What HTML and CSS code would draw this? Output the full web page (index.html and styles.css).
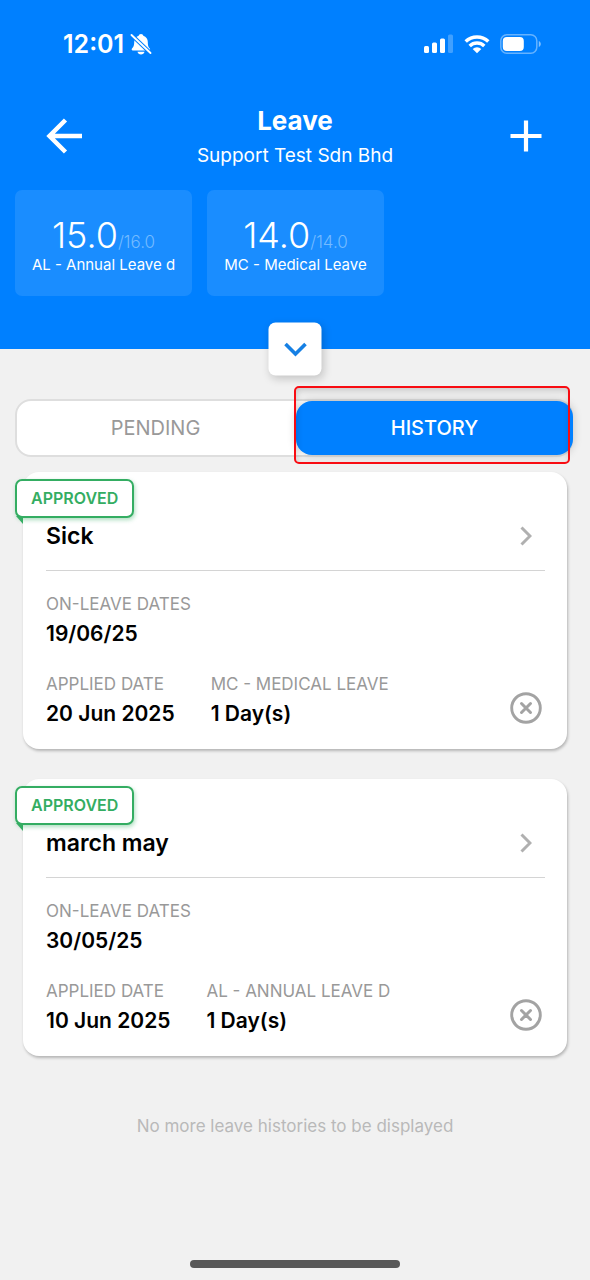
FILE: index.html
```html
<!DOCTYPE html>
<html lang="en">
<head>
<meta charset="utf-8">
<meta name="viewport" content="width=device-width, initial-scale=1">
<title>Leave</title>
<link rel="stylesheet" href="styles.css">
</head>
<body>
<header class="top">
  <div class="status">
    <div class="status-left">
      <span class="clock">12:01</span>
      <svg class="bell" viewBox="0 0 22 22" aria-hidden="true">
        <path fill="#fff" d="M11 1c1.300 0 2.100.8 2.300 1.700 3 .9 4.500 3.400 4.500 6.300 0 4 .8 5.200 2 6.500.7.800.3 2-.8 2H2.800c-1.100 0-1.500-1.200-.8-2 1.200-1.300 2.200-2.500 2.200-6.500 0-2.900 1.500-5.400 4.500-6.300C8.900 1.800 9.700 1 11 1zM7.500 18.800h7c-.4 1.700-1.800 2.700-3.500 2.700s-3.100-1-3.500-2.700z"/>
        <path stroke="#0080ff" stroke-width="4" d="M1 1.500l20 19"/>
        <path stroke="#fff" stroke-width="1.900" stroke-linecap="round" d="M1.500 2l19 18"/>
      </svg>
    </div>
    <div class="status-right">
      <svg class="signal" viewBox="0 0 30 20" aria-hidden="true">
        <g fill="#fff"><rect x="0" y="12" width="5" height="7" rx="1.500"/><rect x="8" y="8.500" width="5" height="10.500" rx="1.500"/><rect x="16" y="4.500" width="5" height="14.500" rx="1.500"/><rect x="24" y="0.500" width="5" height="18.500" rx="1.500" opacity=".25"/></g>
      </svg>
      <svg class="wifi" viewBox="0 0 26 20" aria-hidden="true">
        <g fill="none" stroke="#fff" stroke-width="3.500"><path d="M1.700 7.600a16.300 16.300 0 0 1 22.600 0"/><path d="M5.700 11.900a10.600 10.600 0 0 1 14.600 0"/></g>
        <path fill="#fff" d="M8.700 14.900a6.200 6.200 0 0 1 8.600 0L13 19.200z"/>
      </svg>
      <svg class="battery" viewBox="0 0 42 20" aria-hidden="true">
        <rect x=".8" y=".8" width="36" height="18.400" rx="6" fill="none" stroke="#fff" stroke-width="1.500" opacity=".4"/>
        <rect x="2.800" y="3" width="21" height="14" rx="4" fill="#fff"/>
        <path d="M38.800 7v6c1.200-.5 2-1.600 2-3s-.8-2.500-2-3z" fill="#fff" opacity=".5"/>
      </svg>
    </div>
  </div>

  <div class="bar">
    <button class="icon-btn" type="button" aria-label="Back">
      <svg viewBox="0 0 36 36" aria-hidden="true"><path fill="none" stroke="#fff" stroke-width="4.500" d="M36 18H4M19.500 2L3.500 18l16 16"/></svg>
    </button>
    <div class="heading">
      <h1 class="title">Leave</h1>
      <p class="company">Support Test Sdn Bhd</p>
    </div>
    <button class="icon-btn" type="button" aria-label="Apply for leave">
      <svg viewBox="0 0 36 36" aria-hidden="true"><path fill="none" stroke="#fff" stroke-width="4.200" d="M18 2.500v31M2.500 18h31"/></svg>
    </button>
  </div>

  <div class="balances">
    <div class="balance">
      <div class="amount">15.0<span class="quota">/16.0</span></div>
      <div class="kind">AL - Annual Leave d</div>
    </div>
    <div class="balance">
      <div class="amount">14.0<span class="quota">/14.0</span></div>
      <div class="kind">MC - Medical Leave</div>
    </div>
  </div>

  <button class="expand" type="button" aria-label="Show all balances">
    <svg viewBox="0 0 24 16" aria-hidden="true"><path fill="none" stroke="#1680e4" stroke-width="3.600" d="M2 2.500l10 10 10-10"/></svg>
  </button>
</header>

<main class="content">
  <div class="tabs">
    <button class="tab" type="button">PENDING</button>
    <button class="tab tab-active" type="button">HISTORY</button>
    <div class="marker"></div>
  </div>

  <article class="card">
    <span class="badge">APPROVED</span>
    <div class="card-head">
      <h2 class="reason">Sick</h2>
      <svg class="chevron" viewBox="0 0 12 20" aria-hidden="true"><path fill="none" stroke="#b0b0b0" stroke-width="3" d="M1.500 1.500L10 10l-8.500 8.500"/></svg>
    </div>
    <dl class="field">
      <dt>ON-LEAVE DATES</dt>
      <dd>19/06/25</dd>
    </dl>
    <div class="row">
      <dl class="field">
        <dt>APPLIED DATE</dt>
        <dd>20 Jun 2025</dd>
      </dl>
      <dl class="field">
        <dt>MC - MEDICAL LEAVE</dt>
        <dd>1 Day(s)</dd>
      </dl>
      <button class="cancel" type="button" aria-label="Cancel leave">
        <svg viewBox="0 0 32 32" aria-hidden="true"><g fill="none" stroke="#a3a3a3"><circle cx="16" cy="16" r="14.300" stroke-width="2.900"/><path stroke-width="3" stroke-linecap="round" d="M11.500 11.500l9 9M20.500 11.500l-9 9"/></g></svg>
      </button>
    </div>
  </article>

  <article class="card">
    <span class="badge">APPROVED</span>
    <div class="card-head">
      <h2 class="reason">march may</h2>
      <svg class="chevron" viewBox="0 0 12 20" aria-hidden="true"><path fill="none" stroke="#b0b0b0" stroke-width="3" d="M1.500 1.500L10 10l-8.500 8.500"/></svg>
    </div>
    <dl class="field">
      <dt>ON-LEAVE DATES</dt>
      <dd>30/05/25</dd>
    </dl>
    <div class="row">
      <dl class="field">
        <dt>APPLIED DATE</dt>
        <dd>10 Jun 2025</dd>
      </dl>
      <dl class="field">
        <dt>AL - ANNUAL LEAVE D</dt>
        <dd>1 Day(s)</dd>
      </dl>
      <button class="cancel" type="button" aria-label="Cancel leave">
        <svg viewBox="0 0 32 32" aria-hidden="true"><g fill="none" stroke="#a3a3a3"><circle cx="16" cy="16" r="14.300" stroke-width="2.900"/><path stroke-width="3" stroke-linecap="round" d="M11.500 11.500l9 9M20.500 11.500l-9 9"/></g></svg>
      </button>
    </div>
  </article>

  <p class="end">No more leave histories to be displayed</p>
</main>
<footer class="home"><div class="home-bar"></div></footer>
</body>
</html>
```
FILE: styles.css
```css
* { box-sizing: border-box; }

body {
  margin: 0;
  min-height: 100vh;
  display: flex;
  flex-direction: column;
  background: #f1f1f1;
  color: #000;
  font-family: Inter, "Liberation Sans", sans-serif;
}

h1, h2, p, dl, dd { margin: 0; }

button {
  padding: 0;
  border: 0;
  background: none;
  font: inherit;
  cursor: pointer;
}

svg { display: block; }

/* Header */
.top {
  position: relative;
  padding-bottom: 53px;
  background: #0080ff;
  color: #fff;
}

.status {
  display: flex;
  justify-content: space-between;
  align-items: center;
  height: 88px;
  padding: 0 48px 0 63px;
}

.status-left { display: flex; align-items: center; gap: 6px; }
.status-right { display: flex; align-items: center; gap: 10px; }
.clock { font-size: 25px; font-weight: 600; }
.bell { width: 22px; height: 22px; }
.signal { width: 30px; height: 20px; }
.wifi { width: 26px; height: 20px; }
.battery { width: 42px; height: 20px; }

.bar {
  display: flex;
  justify-content: space-between;
  align-items: center;
  height: 96px;
  padding: 0 46px;
}

.icon-btn { width: 36px; height: 36px; }
.heading { padding-top: 4px; text-align: center; }
.title { font-size: 26px; line-height: 36px; font-weight: 700; }
.company { font-size: 19px; line-height: 34px; }

.balances {
  display: flex;
  gap: 15px;
  padding: 6px 15px 0;
}

.balance {
  width: 177px;
  height: 106px;
  padding-top: 24px;
  border-radius: 7px;
  background: #1a8dff;
  text-align: center;
}

.amount { font-size: 36px; line-height: 42px; font-weight: 300; }
.quota { color: #74bbff; font-size: 17px; line-height: 18px; }
.kind { font-size: 15px; line-height: 18px; }

.expand {
  position: absolute;
  left: 50%;
  bottom: 0;
  display: flex;
  align-items: center;
  justify-content: center;
  width: 53px;
  height: 53px;
  border-radius: 7px;
  background: #fff;
  box-shadow: 2px 3px 8px rgba(0, 0, 0, .18);
  transform: translate(-50%, 50%);
}

.expand svg { width: 24px; height: 16px; }

/* Tabs */
.content { flex: 1; padding: 50px 23px 0; }

.tabs {
  position: relative;
  display: flex;
  height: 58px;
  margin: 0 -6px 15px -8px;
  border: 2px solid #dedede;
  border-radius: 16px;
  background: #fff;
}

.tab {
  flex: 1;
  border-radius: 16px;
  color: #999;
  font-size: 20px;
}

.tab-active {
  margin: 0 -2px 0 2px;
  background: #0080ff;
  color: #fff;
  font-weight: 500;
  box-shadow: 0 0 10px rgba(0, 0, 0, .2);
}

.marker {
  position: absolute;
  top: -15px;
  right: 1px;
  bottom: -9px;
  left: 50%;
  border: 2px solid #f80c12;
  border-radius: 5px;
  box-shadow: inset 1px 3px 6px rgba(0, 0, 0, .16);
  pointer-events: none;
}

/* Leave cards */
.card {
  position: relative;
  margin-bottom: 30px;
  padding: 44px 22px 19px 23px;
  border-radius: 16px;
  background: #fff;
  box-shadow: 1px 2px 3px rgba(0, 0, 0, .25);
}

.badge {
  position: absolute;
  top: 7px;
  left: -8px;
  padding: 0 14px;
  border: 2px solid #34ad62;
  border-radius: 7px;
  background: #fff;
  box-shadow: 1px 2px 4px rgba(52, 173, 98, .4);
  color: #34ad62;
  font-size: 16px;
  line-height: 35px;
  font-weight: 600;
}

.badge::after {
  content: "";
  position: absolute;
  top: 100%;
  left: -1px;
  border-top: 8px solid #34ad62;
  border-left: 7px solid transparent;
}

.card-head {
  display: flex;
  justify-content: space-between;
  align-items: center;
  margin-bottom: 19px;
  padding: 0 13px 14px 0;
  border-bottom: 1px solid #d4d4d4;
}

.reason { font-size: 23px; line-height: 40px; font-weight: 600; }
.chevron { width: 12px; height: 20px; }
.field dt { color: #999; font-size: 17px; line-height: 28px; }
.field dd { font-size: 21px; line-height: 32px; font-weight: 600; }

.row {
  display: flex;
  align-items: flex-end;
  gap: 36px;
  margin-top: 20px;
}

.cancel { width: 32px; height: 32px; margin: 0 3px 6px auto; }

.end {
  margin-top: 55px;
  color: #b9b9b9;
  font-size: 17px;
  line-height: 30px;
  text-align: center;
}

.home { padding: 12px 0; }

.home-bar {
  width: 210px;
  height: 8px;
  margin: 0 auto;
  border-radius: 4px;
  background: #585858;
}
```
